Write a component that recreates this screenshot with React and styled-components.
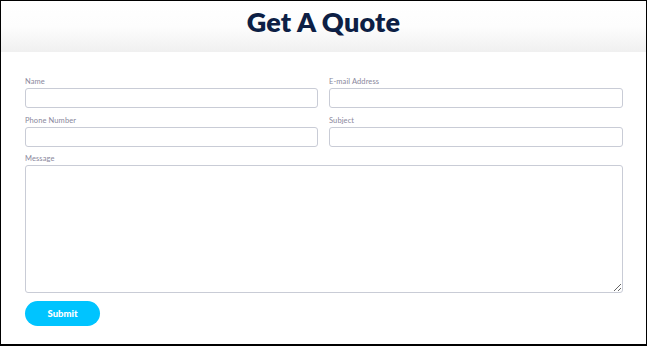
import React from 'react';
import styled, { createGlobalStyle } from 'styled-components';

const GlobalStyle = createGlobalStyle`
    html, body {
        margin: 0;
        padding: 0;
        background: #fff;
    }
    body {
        font-family: 'Lato', 'Liberation Sans', sans-serif;
    }
`

const App = () => {
    return (
      <>
        <GlobalStyle />
        <Frame>
            <Header>
                <Title>Get A Quote</Title>
            </Header>
            <Form onSubmit={(e) => e.preventDefault()}>
                <Grid>
                    <Field>
                        <Label>Name</Label>
                        <Input type="text" />
                    </Field>
                    <Field>
                        <Label>E-mail Address</Label>
                        <Input type="email" />
                    </Field>
                    <Field>
                        <Label>Phone Number</Label>
                        <Input type="text" />
                    </Field>
                    <Field>
                        <Label>Subject</Label>
                        <Input type="text" />
                    </Field>
                    <Field wide>
                        <Label>Message</Label>
                        <Message />
                    </Field>
                </Grid>
                <SubmitButton type="submit">Submit</SubmitButton>
            </Form>
        </Frame>
      </>
    )
}

const Frame = styled.div`
    width: 647px;
    height: 346px;
    box-sizing: border-box;
    border: 1px solid #000;
    border-bottom-width: 2px;
    background: #fff;
    display: flex;
    flex-direction: column;
`

const Header = styled.div`
    height: 51px;
    display: flex;
    justify-content: center;
    align-items: flex-start;
    background: linear-gradient(to bottom, #ffffff 0%, #fdfdfd 50%, #f0f0f0 100%);
`

const Title = styled.h1`
    margin: 4px 0 0 0;
    font-family: 'Lato', sans-serif;
    font-weight: 800;
    font-size: 27px;
    line-height: 34px;
    color: #0d1f45;
    letter-spacing: 0.2px;
`

const Form = styled.form`
    padding: 25px 23px 0 24px;
    display: flex;
    flex-direction: column;
`

const Grid = styled.div`
    display: grid;
    grid-template-columns: 293px 294px;
    column-gap: 11px;
    row-gap: 8px;
`

const Field = styled.div`
    display: flex;
    flex-direction: column;
    gap: 2px;
    grid-column: ${props => props.wide ? '1 / -1' : 'auto'};
    margin-top: ${props => props.wide ? '-1px' : '0'};
`

const Label = styled.label`
    font-family: 'Lato', sans-serif;
    font-size: 7.5px;
    line-height: 9px;
    letter-spacing: 0.1px;
    color: #8a879c;
`

const Input = styled.input`
    box-sizing: border-box;
    height: 20px;
    width: 100%;
    margin: 0;
    border: 1px solid #c9ccd6;
    border-radius: 3px;
    background: #fff;
    outline: none;
`

const Message = styled.textarea`
    box-sizing: border-box;
    height: 128px;
    width: 100%;
    margin: 0;
    border: 1px solid #c9ccd6;
    border-radius: 3px;
    background: #fff;
    resize: both;
    outline: none;
`

const SubmitButton = styled.button`
    margin-top: 8px;
    width: 75px;
    height: 25px;
    border: none;
    border-radius: 13px;
    background-color: #00c4ff;
    color: #fff;
    font-family: 'Lato', sans-serif;
    font-weight: 900;
    font-size: 9.5px;
    padding: 0;
    text-align: center;
    cursor: pointer;
`

export default App
